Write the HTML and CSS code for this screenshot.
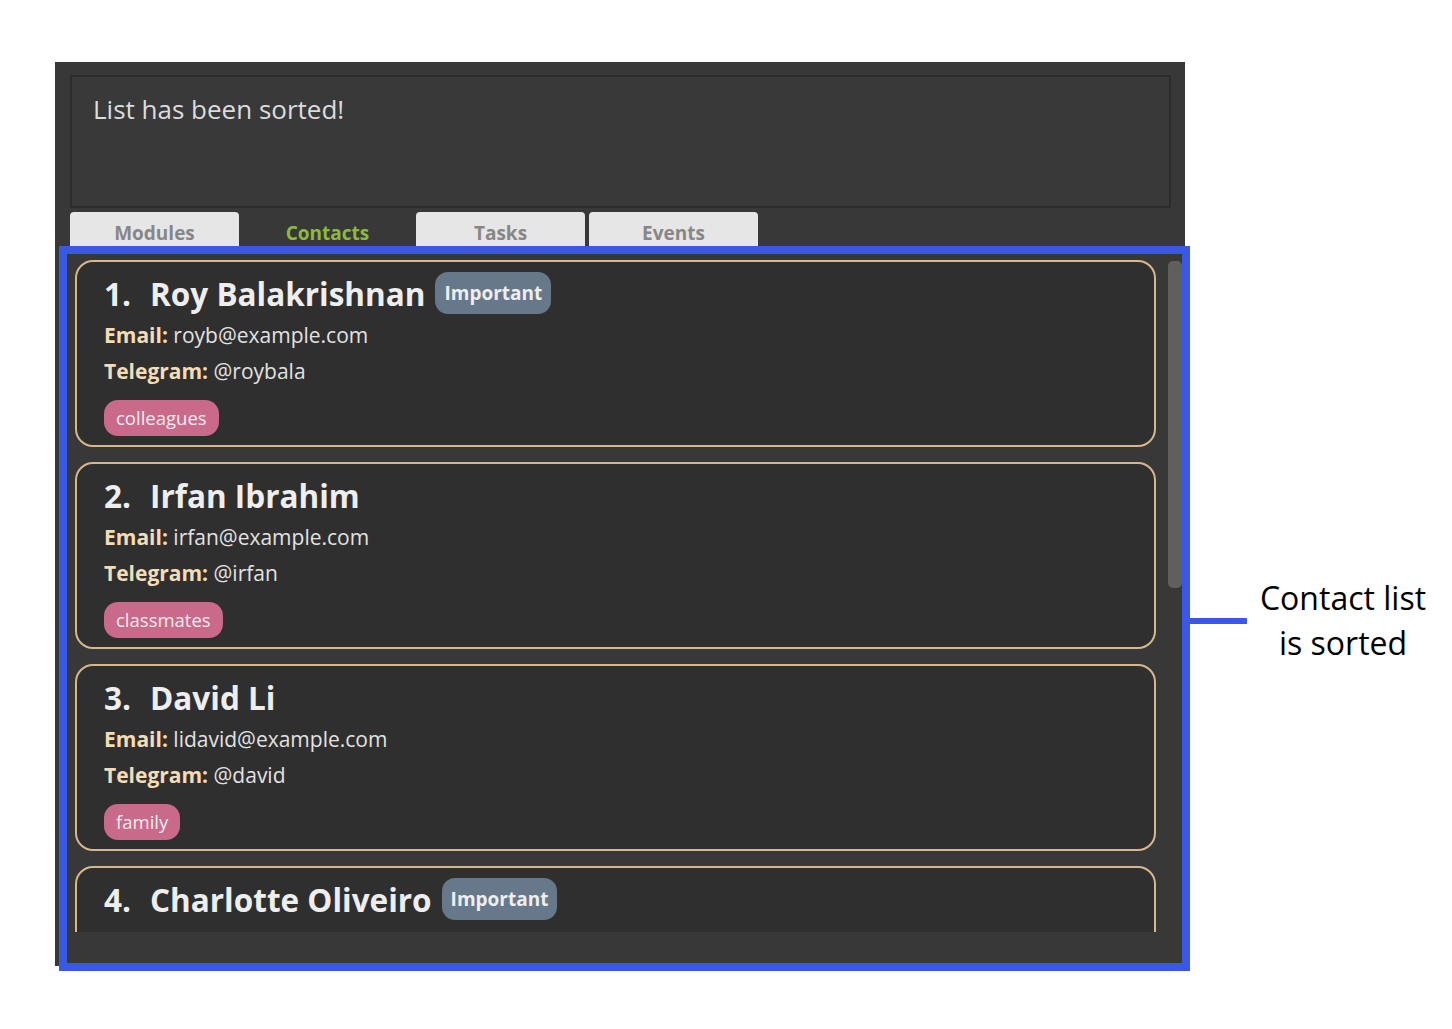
FILE: index.html
```html
<!DOCTYPE html>
<html>
<head>
<meta charset="utf-8">
<link rel="stylesheet" href="styles.css">
</head>
<body>
<div class="canvas">
  <div class="app">
    <div class="result">List has been sorted!</div>
    <div class="tabs">
      <div class="tab">Modules</div>
      <div class="tab active">Contacts</div>
      <div class="tab">Tasks</div>
      <div class="tab">Events</div>
    </div>
    <div class="list">
      <div class="cards">
        <div class="card">
          <div class="name-row"><span class="idx">1.</span><span class="name">Roy Balakrishnan</span><span class="badge">Important</span></div>
          <div class="field"><b>Email:</b> royb@example.com</div>
          <div class="field"><b>Telegram:</b> @roybala</div>
          <div class="tags"><span class="tag">colleagues</span></div>
        </div>
        <div class="card">
          <div class="name-row"><span class="idx">2.</span><span class="name">Irfan Ibrahim</span></div>
          <div class="field"><b>Email:</b> irfan@example.com</div>
          <div class="field"><b>Telegram:</b> @irfan</div>
          <div class="tags"><span class="tag">classmates</span></div>
        </div>
        <div class="card">
          <div class="name-row"><span class="idx">3.</span><span class="name">David Li</span></div>
          <div class="field"><b>Email:</b> lidavid@example.com</div>
          <div class="field"><b>Telegram:</b> @david</div>
          <div class="tags"><span class="tag">family</span></div>
        </div>
        <div class="card">
          <div class="name-row"><span class="idx">4.</span><span class="name">Charlotte Oliveiro</span><span class="badge">Important</span></div>
          <div class="field"><b>Email:</b> charlotte@example.com</div>
          <div class="field"><b>Telegram:</b> @charlotte</div>
          <div class="tags"><span class="tag">neighbours</span></div>
        </div>
      </div>
      <div class="scrollbar"></div>
    </div>
  </div>
  <div class="highlight"></div>
  <div class="connector"></div>
  <div class="note">Contact list<br>is sorted</div>
</div>
</body>
</html>
```

FILE: styles.css
```css
html, body {
  margin: 0;
  padding: 0;
  background: #ffffff;
}
.canvas {
  position: relative;
  width: 1452px;
  height: 1029px;
  padding: 62px 0 0 55px;
  box-sizing: border-box;
  font-family: "Open Sans", "Noto Sans", sans-serif;
}
.app {
  width: 1130px;
  height: 904px;
  background: #383838;
  padding-top: 13px;
  box-sizing: border-box;
  display: flex;
  flex-direction: column;
}
.result {
  margin: 0 14px 0 15px;
  height: 133px;
  box-sizing: border-box;
  border: 2px solid #2c2c2c;
  background: #393939;
  color: #dcdcdc;
  font-size: 26px;
  padding: 15px 0 0 21px;
  line-height: 34px;
}
.tabs {
  margin: 4px 0 0 15px;
  display: flex;
  gap: 4px;
  height: 35px;
}
.tab {
  width: 169px;
  height: 35px;
  box-sizing: border-box;
  background: #e6e6e6;
  border-radius: 4px 4px 0 0;
  color: #878787;
  font-weight: 700;
  font-size: 19px;
  text-align: center;
  line-height: 43px;
}
.tab.active {
  background: transparent;
  color: #8bbb3c;
}
.list {
  height: 685px;
  overflow: hidden;
  display: flex;
  flex-shrink: 0;
}
.cards {
  padding: 13px 0 0 20px;
  display: flex;
  flex-direction: column;
  gap: 15px;
  width: 1081px;
  flex-shrink: 0;
}
.card {
  width: 1081px;
  height: 187px;
  box-sizing: border-box;
  flex-shrink: 0;
  border: 2px solid #d6b88a;
  border-radius: 18px;
  background: #2f2f2f;
  padding: 10px 20px 9px 27px;
}
.name-row {
  height: 42px;
  display: flex;
  align-items: center;
  color: #eeeeee;
  font-weight: 700;
  font-size: 31.5px;
}
.idx {
  margin-right: 19px;
}
.name {
  margin-right: 10px;
}
.badge {
  height: 42px;
  box-sizing: border-box;
  padding: 0 9px;
  border-radius: 13px;
  background: #66788a;
  color: #eeeeee;
  font-size: 19px;
  line-height: 42px;
}
.field {
  height: 36px;
  line-height: 36px;
  color: #e2e2e2;
  font-size: 21px;
}
.name-row + .field {
  margin-top: 3px;
}
.field b {
  color: #f3dcb6;
  font-weight: 700;
}
.tags {
  margin-top: 11px;
  display: flex;
}
.tag {
  height: 36px;
  line-height: 36px;
  padding: 0 12px;
  border-radius: 14px;
  background: #c96a8b;
  color: #f2eaee;
  font-size: 18.5px;
}
.scrollbar {
  margin: 14px 0 0 12px;
  width: 14px;
  height: 327px;
  background: #5f5f5f;
  border-radius: 5px;
  flex-shrink: 0;
}
.highlight {
  position: absolute;
  left: 59px;
  top: 246px;
  width: 1131px;
  height: 725px;
  box-sizing: border-box;
  border: 8px solid #3b57e5;
}
.connector {
  position: absolute;
  left: 1189px;
  top: 618px;
  width: 58px;
  height: 6px;
  background: #3b57e5;
}
.note {
  position: absolute;
  left: 1240px;
  top: 575px;
  width: 206px;
  text-align: center;
  color: #000000;
  font-size: 32px;
  line-height: 45px;
}
```
